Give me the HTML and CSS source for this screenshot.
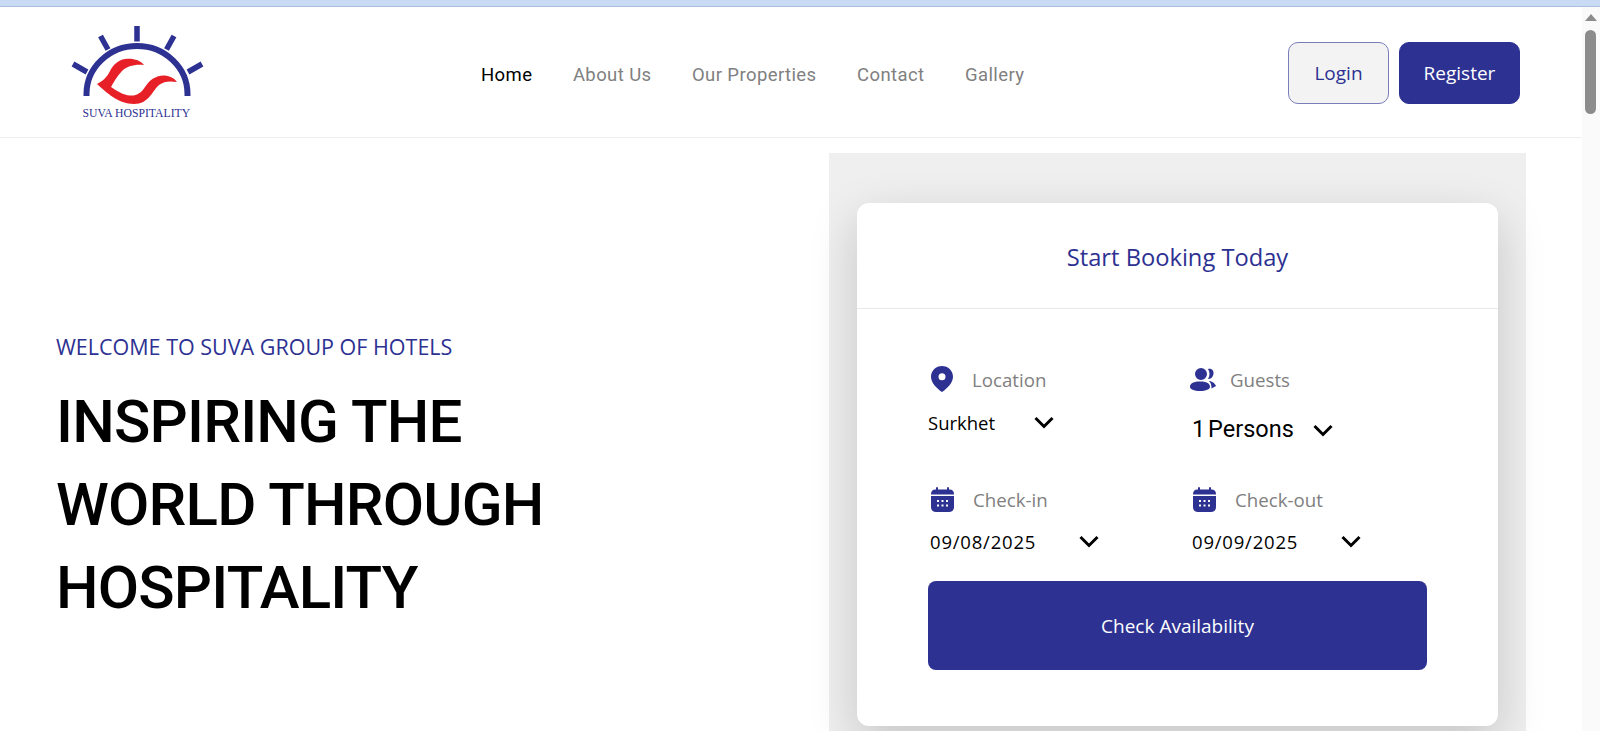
FILE: index.html
```html
<!DOCTYPE html>
<html lang="en">
<head>
<meta charset="utf-8">
<title>Suva Hospitality</title>
<link rel="stylesheet" href="styles.css">
</head>
<body>
<div class="topstrip"></div>
<div class="window">
  <div class="page">
    <header class="navbar">
      <a class="logo" href="#" aria-label="Suva Hospitality">
        <svg width="135" height="96" viewBox="70 25 135 96">
          <g fill="none" stroke="#2d3192">
            <path d="M86.500 97V95A50.500 48 0 0 1 187.500 95V97" stroke-width="6"/>
            <path d="M137 27V42.500M100.500 37L108 50.500M174 37L166.500 50.500M73 65L87 73M202 65L188 73" stroke-width="5.500"/>
          </g>
          <path fill="#e71f26" d="M97 85C103 82 107 78 110 72C113 66 118 61 125 60C133 59 140 61 144 66C135 65 127 67 122 72C117 77 114 83 111 88C117 92 123 96 130 96.500C137 97 141 94 145 88C149 82 155 76 165 76.500C170 77 174 79 177 83C170 82 164 82 159 86C152 92 149 105 134 105C118 105 106 93 97 85Z"/>
          <text class="logo-text" x="82.500" y="118">SUVA HOSPITALITY</text>
        </svg>
      </a>
      <nav class="links">
        <a class="link active" href="#">Home</a>
        <a class="link" href="#">About Us</a>
        <a class="link" href="#">Our Properties</a>
        <a class="link" href="#">Contact</a>
        <a class="link" href="#">Gallery</a>
      </nav>
      <div class="auth">
        <button class="btn btn-login">Login</button>
        <button class="btn btn-register">Register</button>
      </div>
    </header>
    <main class="hero">
      <section class="intro">
        <p class="welcome">WELCOME TO SUVA GROUP OF HOTELS</p>
        <h1 class="headline">INSPIRING THE<br>WORLD THROUGH<br>HOSPITALITY</h1>
      </section>
      <section class="panel">
        <div class="card">
          <h2 class="card-title">Start Booking Today</h2>
          <form class="form">
            <div class="field">
              <div class="label label-a">
                <svg class="icon" width="22" height="26" viewBox="0 0 22 26"><path fill="#2d3192" fill-rule="evenodd" d="M11 0C5 0 0 4.700 0 10.700C0 17 6 22.500 11 26C16 22.500 22 17 22 10.700C22 4.700 17 0 11 0ZM11 7.200A3.500 3.500 0 1 1 11 14.200A3.500 3.500 0 0 1 11 7.200Z"/></svg>
                <span>Location</span>
              </div>
              <div class="value value-a"><span>Surkhet</span><svg class="chev" width="20" height="13" viewBox="0 0 20 13"><path d="M1.500 2L10 10.500L18.500 2" fill="none" stroke="#000" stroke-width="3"/></svg></div>
            </div>
            <div class="field">
              <div class="label label-b">
                <svg class="icon" width="26" height="24" viewBox="0 0 26 24"><path fill="#2d3192" d="M11 1A6 6 0 1 1 11 13A6 6 0 0 1 11 1ZM18 2C22 1 24 4 23.500 7C23 10 21 12 18 12C20 9 20 5 18 2ZM0 20C0 16 4 14.500 10 14.500C16 14.500 20 16 20 20C20 22 16 24 10 24C4 24 0 22 0 20ZM19 14C22 14 25 16.500 26 19L21.500 21.500C21.500 18 21 16 19 14Z"/></svg>
                <span>Guests</span>
              </div>
              <div class="value value-b"><span>1 Persons</span><svg class="chev" width="20" height="13" viewBox="0 0 20 13"><path d="M1.500 2L10 10.500L18.500 2" fill="none" stroke="#000" stroke-width="3"/></svg></div>
            </div>
            <div class="field">
              <div class="label label-a">
                <svg class="icon" width="23" height="25" viewBox="0 0 23 25"><path fill="#2d3192" d="M5 0.500C5 0 7 0 7 0.500V2.500H16V0.500C16 0 18 0 18 0.500V2.500H18.500C21.500 2.500 23 4.500 23 7V7.500H0V7C0 4.500 1.500 2.500 4.500 2.500H5ZM0 9H23V20C23 23 21 25 18 25H5C2 25 0 23 0 20Z"/><path fill="#fff" d="M6 13h2v2H6zM10.500 13h2v2h-2zM15 13h2v2h-2zM6 17.500h2v2H6zM10.500 17.500h2v2h-2zM15 17.500h2v2h-2z"/></svg>
                <span>Check-in</span>
              </div>
              <div class="value value-c"><span>09/08/2025</span><svg class="chev" width="20" height="13" viewBox="0 0 20 13"><path d="M1.500 2L10 10.500L18.500 2" fill="none" stroke="#000" stroke-width="3"/></svg></div>
            </div>
            <div class="field">
              <div class="label label-d">
                <svg class="icon" width="23" height="25" viewBox="0 0 23 25"><path fill="#2d3192" d="M5 0.500C5 0 7 0 7 0.500V2.500H16V0.500C16 0 18 0 18 0.500V2.500H18.500C21.500 2.500 23 4.500 23 7V7.500H0V7C0 4.500 1.500 2.500 4.500 2.500H5ZM0 9H23V20C23 23 21 25 18 25H5C2 25 0 23 0 20Z"/><path fill="#fff" d="M6 13h2v2H6zM10.500 13h2v2h-2zM15 13h2v2h-2zM6 17.500h2v2H6zM10.500 17.500h2v2h-2zM15 17.500h2v2h-2z"/></svg>
                <span>Check-out</span>
              </div>
              <div class="value value-c"><span>09/09/2025</span><svg class="chev" width="20" height="13" viewBox="0 0 20 13"><path d="M1.500 2L10 10.500L18.500 2" fill="none" stroke="#000" stroke-width="3"/></svg></div>
            </div>
            <button class="submit" type="button">Check Availability</button>
          </form>
        </div>
      </section>
    </main>
  </div>
  <aside class="scrollbar">
    <span class="scroll-up"></span>
    <span class="scroll-thumb"></span>
  </aside>
</div>
</body>
</html>
```
FILE: styles.css
```css
* { box-sizing: border-box; }
html, body { height: 100%; }
body {
  margin: 0;
  overflow: hidden;
  background: #fff;
  color: #000;
  font-family: "Open Sans", "Noto Sans", sans-serif;
}
.topstrip {
  height: 7px;
  background: #c9daf4;
  border-bottom: 1px solid #a9bfe0;
}
.window {
  display: flex;
  height: 724px;
}
.page {
  flex: 1;
  min-width: 0;
  overflow: hidden;
}
.navbar {
  display: flex;
  align-items: center;
  height: 131px;
  padding: 0 62px 0 70px;
  border-bottom: 1px solid #efefef;
}
.logo {
  display: block;
  width: 135px;
  height: 96px;
}
.logo svg { display: block; }
.logo-text {
  font-family: "Liberation Serif", serif;
  font-size: 11.700px;
  fill: #2d3192;
}
.links {
  display: flex;
  gap: 40.500px;
  margin-left: 276px;
  margin-top: 5px;
}
.link {
  font-family: Roboto, sans-serif;
  font-size: 18.500px;
  line-height: 24px;
  letter-spacing: 0.4px;
  color: #808080;
  text-decoration: none;
}
.link.active { color: #000; }
.auth {
  display: flex;
  gap: 10px;
  margin-left: auto;
  margin-top: 1px;
}
.btn {
  height: 62px;
  border-radius: 10px;
  font-family: "Open Sans", sans-serif;
  font-size: 19px;
}
.btn-login {
  width: 101px;
  background: #f3f3f3;
  border: 1px solid #7a7dbb;
  color: #2d3192;
}
.btn-register {
  width: 121px;
  background: #2d3192;
  border: 1px solid #2d3192;
  color: #fff;
}
.hero {
  display: flex;
  padding-top: 15px;
}
.intro {
  width: 829px;
  padding: 179px 0 0 56px;
}
.welcome {
  margin: 0;
  font-size: 21.500px;
  line-height: 30px;
  color: #2d3192;
}
.headline {
  margin: 18px 0 0;
  font-family: Roboto, sans-serif;
  font-size: 60px;
  font-weight: 500;
  line-height: 83px;
  letter-spacing: -0.800px;
  color: #000;
}
.panel {
  width: 697px;
  height: 600px;
  padding: 50px 28px 0;
  background: #efefef;
}
.card {
  height: 523px;
  background: #fff;
  border-radius: 12px;
  box-shadow: 0 16px 48px rgba(0, 0, 0, 0.175);
}
.card-title {
  margin: 0;
  height: 106px;
  border-bottom: 1px solid #e8e8e8;
  font-size: 23.700px;
  font-weight: 400;
  line-height: 109px;
  text-align: center;
  color: #2d3192;
}
.form {
  display: grid;
  grid-template-columns: 262px 237px;
  grid-template-rows: 120px 94px 89px;
  padding: 57px 71px 0;
}
.field { min-width: 0; }
.label {
  display: flex;
  align-items: center;
  height: 26px;
  font-size: 18.700px;
  color: #808080;
}
.label-a { padding-left: 3px; }
.label-a .icon { margin-right: 19px; }
.label-b .icon { margin-right: 14px; }
.label-d { padding-left: 3px; }
.label-d .icon { margin-right: 19px; }
.value {
  display: flex;
  align-items: center;
  color: #000;
}
.value-a {
  margin-top: 16px;
  height: 28px;
  font-size: 18.500px;
}
.value-a .chev { margin-left: 39px; }
.value-b {
  margin-top: 22px;
  height: 30px;
  padding-left: 2px;
  font-family: Roboto, sans-serif;
  font-size: 23.500px;
  word-spacing: -3px;
}
.value-b .chev { margin-left: 19px; margin-top: 3px; }
.value-c {
  margin-top: 15px;
  height: 28px;
  padding-left: 2px;
  font-size: 18.500px;
  letter-spacing: 0.800px;
}
.value-c .chev { margin-left: 43px; }
.submit {
  grid-column: 1 / -1;
  height: 89px;
  margin-top: 1px;
  border: 0;
  border-radius: 8px;
  background: #2d3192;
  color: #fff;
  font-family: "Open Sans", sans-serif;
  font-size: 19px;
}
.scrollbar {
  flex: 0 0 18px;
  background: #fafafa;
}
.scroll-up {
  display: block;
  width: 0;
  margin: 7px auto 0;
  border-left: 6px solid transparent;
  border-right: 6px solid transparent;
  border-bottom: 7px solid #8c8c8c;
}
.scroll-thumb {
  display: block;
  width: 11px;
  height: 84px;
  margin: 9px 0 0 3px;
  border-radius: 6px;
  background: #8c8c8c;
}
```
